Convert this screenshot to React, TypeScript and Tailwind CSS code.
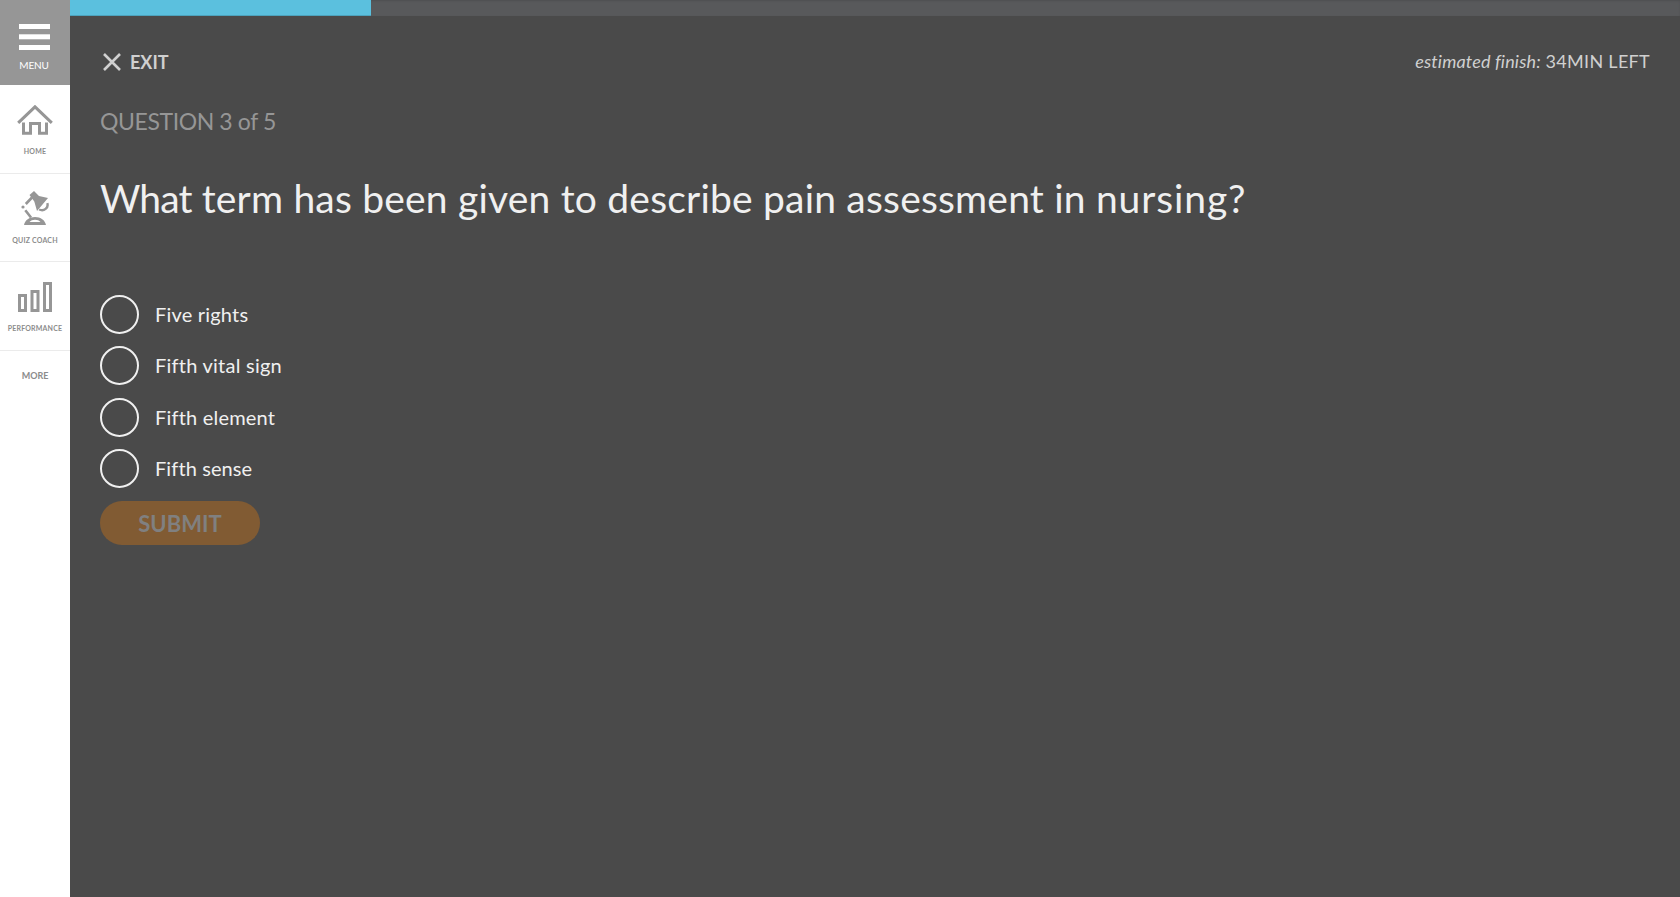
import type { ReactNode } from "react";

const answers = [
  { text: "Five rights", spacing: "tracking-[0.2px]" },
  { text: "Fifth vital sign", spacing: "tracking-[0.24px]" },
  { text: "Fifth element", spacing: "tracking-[0.2px]" },
  { text: "Fifth sense", spacing: "tracking-[0.1px]" },
];

function NavItem({ label, className, children }: { label: string; className: string; children: ReactNode }) {
  return (
    <a className={`flex flex-col items-center border-b border-[#ebebeb] ${className}`}>
      {children}
      <span className="text-[7px] leading-[10px] font-bold tracking-[0.18px] whitespace-nowrap text-[#8c8c8c]">{label}</span>
    </a>
  );
}

function Sidebar() {
  return (
    <nav className="flex w-[70px] shrink-0 flex-col bg-white">
      <button className="flex h-[85px] flex-col items-center bg-[#969696] pt-6 pr-0.5 text-white">
        <svg width="31" height="26" viewBox="0 0 31 26" className="ml-px" fill="currentColor">
          <rect width="31" height="5" />
          <rect y="10.3" width="31" height="5" />
          <rect y="21" width="31" height="5" />
        </svg>
        <span className="mt-[9px] text-[10px] leading-3 tracking-[-0.2px]">MENU</span>
      </button>
      <NavItem label="HOME" className="h-[89px] gap-[11px] pt-5">
        <svg width="36" height="30" viewBox="0 0 36 30" fill="none" stroke="#969696" strokeWidth="3">
          <path d="M1.2 17.8 18 1.8l16.8 16" />
          <path d="M6.5 17.5v10.8h7V18.5h9v9.8h7V17.5" />
        </svg>
      </NavItem>
      <NavItem label="QUIZ COACH" className="h-[88px] gap-2.5 pt-[17px]">
        <svg width="28" height="34" viewBox="0 0 28 34" fill="#969696">
          <path d="M8.5 4 13 0l5 5 9 2-11 13-2.7-9.5z" />
          <path d="M11 6.5 4.8 13M4.3 19.2l5.7 7.3" stroke="#969696" strokeWidth="2.6" />
          <circle cx="2" cy="16" r="1.6" />
          <path d="M26.3 12.2c1.5 4.6-3.2 8.5-8.2 6.3" fill="none" stroke="#969696" strokeWidth="2.4" />
          <path fillRule="evenodd" d="M3 34c1-5 5.3-8 11-8s10 3 11 8zM8.5 31h11c-1.5-1.5-3-2.2-5.5-2.2s-4 .7-5.5 2.2z" />
        </svg>
      </NavItem>
      <NavItem label="PERFORMANCE" className="h-[89px] gap-[11px] pt-[19px]">
        <svg width="34" height="31" viewBox="0 0 34 31" fill="none" stroke="#969696" strokeWidth="3">
          <path d="M1.5 14.5h6v15h-6zM14 10.5h6v19h-6zM26.5 2.5h6v27h-6z" />
        </svg>
      </NavItem>
      <button className="mt-[19px] text-center text-[9px] leading-3 font-bold text-[#8c8c8c]">MORE</button>
    </nav>
  );
}

export default function App() {
  return (
    <div className="flex h-[897px] w-full overflow-hidden bg-[#4a4a4a] font-['Lato','Open_Sans',sans-serif]">
      <Sidebar />
      <main className="flex min-w-0 flex-1 flex-col">
        <div className="flex h-4 bg-[#58595b] shadow-[inset_0_1px_2px_rgba(0,0,0,0.12)]">
          <div className="w-[301px] bg-[#5bc0de] shadow-[inset_0_-1px_0_rgba(0,0,0,0.15)]" />
        </div>
        <div className="flex flex-col items-start px-[30px]">
          <header className="mt-8 flex h-7 w-full items-center justify-between text-[18px] leading-7 text-[#d0d0d0]">
            <button className="flex items-center">
              <svg width="18" height="18" viewBox="0 0 18 18" className="ml-[3px]" fill="none" stroke="currentColor" strokeWidth="2.6">
                <path d="m1 1 16 16M17 1 1 17" />
              </svg>
              <span className="ml-[9px] text-[18px] font-bold">EXIT</span>
            </button>
            <p className="-mt-0.5 tracking-[0.15px] whitespace-nowrap">
              <i>estimated finish:</i> <span className="tracking-[0.3px]">34MIN LEFT</span>
            </p>
          </header>
          <p className="mt-[29px] text-[23px] leading-8 tracking-[-0.4px] whitespace-nowrap text-[#969696]">QUESTION 3 of 5</p>
          <h1 className="mt-[33px] text-[39px] leading-[56px] tracking-[0.2px] whitespace-nowrap text-[#f0f0f0]">
            <span className="tracking-[-0.9px]">What</span> term has been given to describe pain assessment in{" "}
            <span className="tracking-[0.9px]">nursing?</span>
          </h1>
          <ul className="mt-[69px] flex flex-col gap-[12.3px]">
            {answers.map((answer) => (
              <li key={answer.text}>
                <label className="flex items-center gap-4 text-[20px] leading-[39px] text-[#f0f0f0]">
                  <span className="size-[39px] rounded-full border-2 border-[#f0f0f0]" />
                  <span className={answer.spacing}>{answer.text}</span>
                </label>
              </li>
            ))}
          </ul>
          <button className="mt-[13px] h-11 w-40 rounded-full bg-[#815b33] pt-0.5 text-[22px] font-bold text-[#808080]">SUBMIT</button>
        </div>
      </main>
    </div>
  );
}
